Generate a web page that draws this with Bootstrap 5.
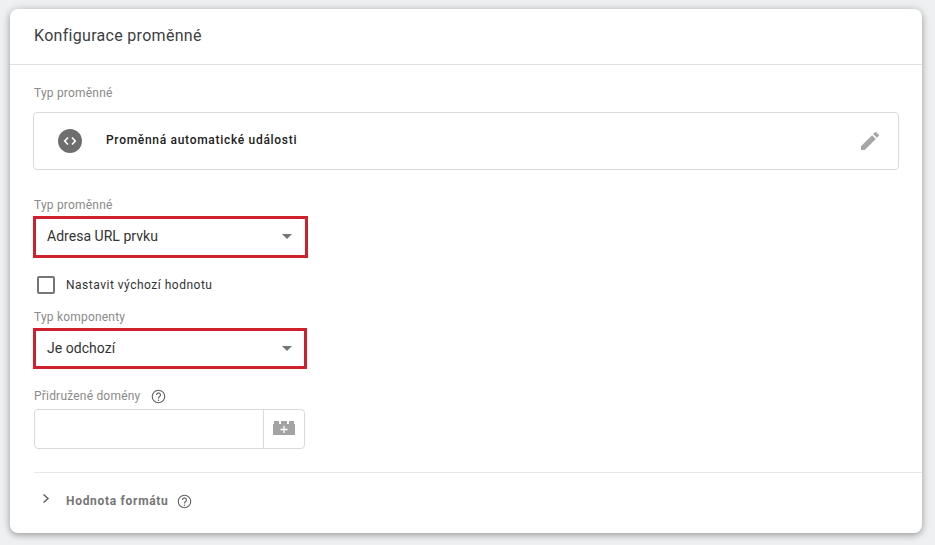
<!DOCTYPE html>
<html lang="cs">
<head>
<meta charset="utf-8">
<title>Konfigurace proměnné</title>
<link href="https://cdn.jsdelivr.net/npm/bootstrap@5.3.0/dist/css/bootstrap.min.css" rel="stylesheet">
<style>
html,body{height:545px;overflow:hidden}
body{background:#eef0f2;font-family:Roboto,"Liberation Sans",sans-serif;padding:9px 13px 12px 10px;color:#212121}
.cfg-card{height:524px;background:#fff;border-radius:8px;box-shadow:0 2px 6px rgba(0,0,0,.28),0 1px 12px rgba(0,0,0,.12);overflow:hidden}
.cfg-head{height:56px;border-bottom:1px solid #e0e0e0;padding:0 24px 2px;font-size:16px;letter-spacing:.3px;color:#3c4043}
.cfg-body{padding:20px 23px 0 23px}
.fld-label{font-size:12px;line-height:16px;color:#8a8a8a;letter-spacing:.2px;padding-left:1px}
.type-box{height:58px;margin-top:11px;border:1px solid #dadada;border-radius:4px;padding:0 16px 0 24px}
.type-ico{width:24px;height:24px;border-radius:50%;background:#6e6e6e;margin-right:24px}
.type-name{font-size:12px;font-weight:500;letter-spacing:.7px;color:#212121;padding-bottom:2px}
.red-sel{border:3px solid #d0202e;padding:0 13px 2px 11px;font-size:14px;color:#333;width:275px;letter-spacing:.03px}
.caret{width:0;height:0;border-left:5px solid transparent;border-right:5px solid transparent;border-top:5px solid #757575}
.sel-a{height:42px;margin-top:3px}
.sel-b{height:41px;margin-top:3px;width:274px;padding-right:12px;padding-bottom:0}
.chk-row{height:18px;margin:18px 0 15px 4px}
.chk-box{width:18px;height:18px;border:2px solid #757575;border-radius:2px;margin-right:11px}
.chk-text{font-size:12px;color:#333;letter-spacing:.5px}
.dom-group{width:271px;height:40px;margin:5px 0 0 1px;border:1px solid #dadada;border-radius:4px}
.dom-in{flex:1}
.dom-add{width:41px;border-left:1px solid #dadada;padding-bottom:2px}
.help-ico{display:block}
.cfg-rule{height:1px;background:#e8e8e8;margin:23px -23px 0 1px}
.fmt-row{height:56px;margin-left:8px}
.fmt-chev{margin-bottom:4px}
.fmt-text{font-size:12px;font-weight:700;color:#757575;letter-spacing:.7px;margin:0 8px 0 15px}
.lbl-gap{margin-right:11px}
.l3{margin-top:0}
.l4{margin-top:19px}
.l2{margin-top:27px}
</style>
</head>
<body>
<div class="cfg-card">
  <div class="cfg-head d-flex align-items-center">Konfigurace proměnné</div>
  <div class="cfg-body">
    <div class="fld-label">Typ proměnné</div>
    <div class="type-box d-flex align-items-center">
      <span class="type-ico d-flex align-items-center justify-content-center">
        <svg width="14" height="10" viewBox="0 0 14 10"><path d="M5 1.5 1.7 5 5 8.5M9 1.5 12.3 5 9 8.5" fill="none" stroke="#fff" stroke-width="1.6"/></svg>
      </span>
      <span class="type-name flex-grow-1">Proměnná automatické události</span>
      <svg width="24" height="24" viewBox="0 0 24 24"><path fill="#a6a6a6" d="M3 17.25V21h3.75L17.81 9.94l-3.75-3.75L3 17.25zM20.71 7.04a1 1 0 0 0 0-1.41l-2.34-2.34a1 1 0 0 0-1.41 0l-1.83 1.83 3.75 3.75 1.83-1.83z"/></svg>
    </div>
    <div class="fld-label l2">Typ proměnné</div>
    <div class="red-sel sel-a d-flex align-items-center justify-content-between"><span>Adresa URL prvku</span><span class="caret"></span></div>
    <div class="chk-row d-flex align-items-center"><span class="chk-box"></span><span class="chk-text">Nastavit výchozí hodnotu</span></div>
    <div class="fld-label l3">Typ komponenty</div>
    <div class="red-sel sel-b d-flex align-items-center justify-content-between"><span>Je odchozí</span><span class="caret"></span></div>
    <div class="fld-label l4 d-flex align-items-center">
      <span class="lbl-gap">Přidružené domény</span>
      <svg class="help-ico" width="15" height="15" viewBox="0 0 24 24"><circle cx="12" cy="12" r="10" fill="none" stroke="#616161" stroke-width="1.8"/><path d="M8.8 9.5a3.2 3.2 0 1 1 5 2.6c-1.2.8-1.8 1.4-1.8 2.9" fill="none" stroke="#616161" stroke-width="1.8"/><circle cx="12" cy="17.8" r="1.2" fill="#616161"/></svg>
    </div>
    <div class="dom-group d-flex">
      <div class="dom-in"></div>
      <div class="dom-add d-flex align-items-center justify-content-center">
        <svg width="24" height="14" viewBox="0 0 24 14"><path fill="#a3a3a3" d="M1 3h1V0h5v3h2V0h6v3h2V0h5v3h1v11H1z"/><path d="M12 5v7M8.5 8.500h7" stroke="#fff" stroke-width="1.300"/></svg>
      </div>
    </div>
    <div class="cfg-rule"></div>
    <div class="fmt-row d-flex align-items-center">
      <svg class="fmt-chev" width="10" height="12" viewBox="0 0 10 12"><path d="M2.500 1.500 7 5.500 2.500 9.500" fill="none" stroke="#616161" stroke-width="1.500"/></svg>
      <span class="fmt-text">Hodnota formátu</span>
      <svg class="help-ico" width="15" height="15" viewBox="0 0 24 24"><circle cx="12" cy="12" r="10" fill="none" stroke="#616161" stroke-width="1.8"/><path d="M8.8 9.5a3.2 3.2 0 1 1 5 2.6c-1.2.8-1.8 1.4-1.8 2.9" fill="none" stroke="#616161" stroke-width="1.8"/><circle cx="12" cy="17.8" r="1.2" fill="#616161"/></svg>
    </div>
  </div>
</div>
<script src="https://cdn.jsdelivr.net/npm/bootstrap@5.3.0/dist/js/bootstrap.bundle.min.js"></script>
</body>
</html>
